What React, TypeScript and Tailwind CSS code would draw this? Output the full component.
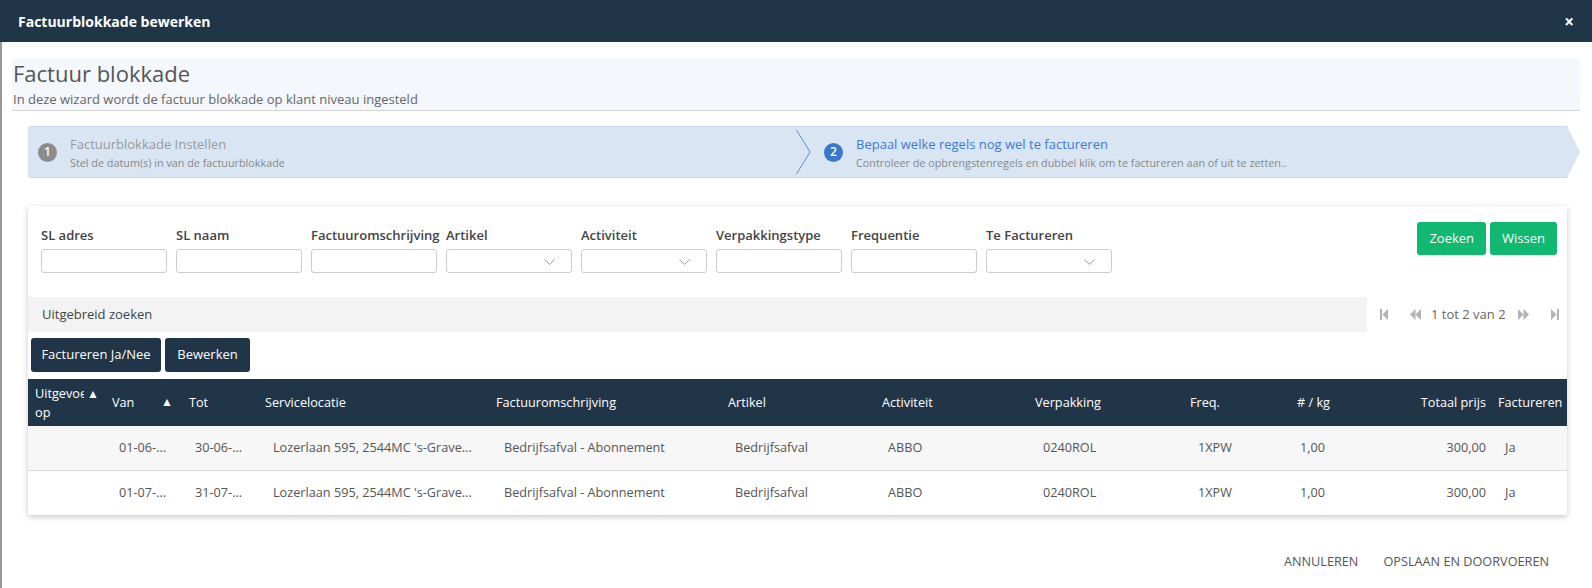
import React from "react";

const filters = [
  { label: "SL adres", select: false },
  { label: "SL naam", select: false },
  { label: "Factuuromschrijving", select: false },
  { label: "Artikel", select: true },
  { label: "Activiteit", select: true },
  { label: "Verpakkingstype", select: false },
  { label: "Frequentie", select: false },
  { label: "Te Factureren", select: true },
];

const rows = [
  ["", "01-06-...", "30-06-...", "Lozerlaan 595, 2544MC 's-Grave...", "Bedrijfsafval - Abonnement", "Bedrijfsafval", "ABBO", "0240ROL", "1XPW", "1,00", "300,00", "Ja"],
  ["", "01-07-...", "31-07-...", "Lozerlaan 595, 2544MC 's-Grave...", "Bedrijfsafval - Abonnement", "Bedrijfsafval", "ABBO", "0240ROL", "1XPW", "1,00", "300,00", "Ja"],
];

const colW = ["w-[77px]", "w-[77px]", "w-[76px]", "w-[231px]", "w-[232px]", "w-[154px]", "w-[153px]", "w-[155px]", "w-[107px]", "w-[110px]", "w-[91px]", "w-[76px]"];
const dataPad = ["pl-[14px]", "pl-[14px]", "pl-[13px]", "pl-[15px]", "pl-[15px]", "pl-[14px]", "pl-[13px]", "pl-[15px]", "pl-[15px]", "pl-[10px]", "pr-[5px] text-right", "pl-[14px]"];

function Chevron() {
  return (
    <svg width="11" height="7" viewBox="0 0 11 7" className="absolute right-[16px] top-[9px]">
      <path d="M0.5 0.5 L5.5 5.5 L10.5 0.5" fill="none" stroke="#9a9a9a" strokeWidth="1" />
    </svg>
  );
}

export default function App() {
  return (
    <div className="w-[1592px] h-[588px] bg-white overflow-hidden flex flex-col font-['Open_Sans',sans-serif] text-[13px] text-[#555]">
      {/* Title bar */}
      <div className="h-[42px] bg-[#213548] flex items-center justify-between pl-[18px] pr-[18px] shrink-0">
        <span className="text-white font-bold text-[14px]">Factuurblokkade bewerken</span>
        <span className="text-white font-bold text-[17px] leading-none">×</span>
      </div>

      <div className="flex-1 border-l-2 border-[#999] pl-[10px] pr-[12px] pt-[16px] flex flex-col">
        {/* Heading panel */}
        <div className="h-[53px] bg-[#f4f7fb] border-b border-[#d4d4d4] pt-[2px] pl-[1px]">
          <div className="text-[22px] leading-[26px] text-[#555]">Factuur blokkade</div>
          <div className="text-[13px] leading-[18px] mt-[4px] text-[#666]">In deze wizard wordt de factuur blokkade op klant niveau ingesteld</div>
        </div>

        {/* Wizard */}
        <div className="mt-[15px] ml-[16px] h-[52px] bg-[#d9e5f3] rounded-l-[3px] border-y border-[#cdd9e8] flex [clip-path:polygon(0_0,calc(100%_-_13px)_0,100%_50%,calc(100%_-_13px)_100%,0_100%)]">
          <div className="relative w-[769px] h-full flex items-center pl-[10px]">
            <div className="w-[19px] h-[19px] rounded-full bg-[#8c8c8c] text-white text-[12px] font-semibold flex items-center justify-center shrink-0">1</div>
            <div className="ml-[13px] flex flex-col">
              <span className="text-[13px] leading-[18px] text-[#999]">Factuurblokkade Instellen</span>
              <span className="text-[10.8px] leading-[15px] mt-[2px] text-[#888]">Stel de datum(s) in van de factuurblokkade</span>
            </div>
            <svg width="15" height="44" viewBox="0 0 15 44" className="absolute right-[-14px] top-[3px]">
              <path d="M0.5 0 L14 22 L0.5 44" fill="none" stroke="#5f8fcc" strokeWidth="1" />
            </svg>
          </div>
          <div className="h-full flex items-center pl-[27px]">
            <div className="w-[19px] h-[19px] rounded-full bg-[#3a78c9] text-white text-[12px] font-semibold flex items-center justify-center shrink-0">2</div>
            <div className="ml-[13px] flex flex-col">
              <span className="text-[13px] leading-[18px] text-[#3a7bd5]">Bepaal welke regels nog wel te factureren</span>
              <span className="text-[10.8px] leading-[15px] mt-[2px] text-[#888]">Controleer de opbrengstenregels en dubbel klik om te factureren aan of uit te zetten..</span>
            </div>
          </div>
        </div>

        {/* Card */}
        <div className="mt-[28px] ml-[16px] mr-[13px] bg-white shadow-[0_2px_6px_rgba(0,0,0,0.22)] pt-[16px]">
          <div className="flex justify-between items-start pl-[13px] pr-[10px]">
            <div className="flex gap-[9px] pt-[4px]">
              {filters.map((f) => (
                <div key={f.label} className="w-[126px] flex flex-col">
                  <span className="font-semibold text-[#444] leading-[19px] whitespace-nowrap">{f.label}</span>
                  <div className="relative mt-[4px] h-[24px] border border-[#ccc] rounded-[3px] bg-white">
                    {f.select && <Chevron />}
                  </div>
                </div>
              ))}
            </div>
            <div className="flex gap-[4px]">
              <button className="h-[33px] px-[12px] bg-[#10b870] text-white rounded-[3px] text-[13px]">Zoeken</button>
              <button className="h-[33px] px-[12px] bg-[#10b870] text-white rounded-[3px] text-[13px]">Wissen</button>
            </div>
          </div>

          <div className="mt-[24px] flex items-center">
            <div className="flex-1 h-[35px] bg-[#f3f3f3] flex items-center pl-[14px] text-[#444]">Uitgebreid zoeken</div>
            <div className="w-[200px] flex items-center pl-[13px] text-[#666]">
              <svg width="8" height="11" viewBox="0 0 8 11" fill="#b3b3b3">
                <rect x="0" y="0" width="2" height="11" />
                <path d="M8 0 L2.5 5.5 L8 11Z" />
              </svg>
              <svg width="11" height="11" viewBox="0 0 11 11" fill="#b3b3b3" className="ml-[22px]">
                <path d="M5.5 0 L0 5.5 L5.5 11Z M11 0 L5.5 5.5 L11 11Z" />
              </svg>
              <span className="ml-[10px] text-[13px]">1 tot 2 van 2</span>
              <svg width="11" height="11" viewBox="0 0 11 11" fill="#b3b3b3" className="ml-[12px]">
                <path d="M0 0 L5.5 5.5 L0 11Z M5.5 0 L11 5.5 L5.5 11Z" />
              </svg>
              <svg width="8" height="11" viewBox="0 0 8 11" fill="#b3b3b3" className="ml-[22px]">
                <path d="M0 0 L5.5 5.5 L0 11Z" />
                <rect x="6" y="0" width="2" height="11" />
              </svg>
            </div>
          </div>

          <div className="mt-[6px] pl-[3px] flex gap-[4px]">
            <button className="h-[34px] w-[130px] bg-[#213548] text-white rounded-[3px] text-[13px]">Factureren Ja/Nee</button>
            <button className="h-[34px] w-[85px] bg-[#213548] text-white rounded-[3px] text-[13px]">Bewerken</button>
          </div>

          {/* Table */}
          <div className="mt-[7px] text-[12.7px]">
            <div className="h-[47px] bg-[#213548] text-white flex items-center">
              <div className={`${colW[0]} pl-[7px] leading-[19px]`}>
                <div className="flex items-center">
                  <span className="w-[49px] overflow-hidden whitespace-nowrap">Uitgevoerd</span>
                  <span className="ml-[3px] text-[12px]">▲</span>
                </div>
                <div>op</div>
              </div>
              <div className={`${colW[1]} pl-[7px] pr-[9px] flex justify-between items-center`}>
                <span>Van</span>
                <span className="text-[12px]">▲</span>
              </div>
              <div className={`${colW[2]} pl-[7px]`}>Tot</div>
              <div className={`${colW[3]} pl-[7px]`}>Servicelocatie</div>
              <div className={`${colW[4]} pl-[7px]`}>Factuuromschrijving</div>
              <div className={`${colW[5]} pl-[7px]`}>Artikel</div>
              <div className={`${colW[6]} pl-[7px]`}>Activiteit</div>
              <div className={`${colW[7]} pl-[7px]`}>Verpakking</div>
              <div className={`${colW[8]} pl-[7px]`}>Freq.</div>
              <div className={`${colW[9]} pl-[7px]`}>#&nbsp;/&nbsp;kg</div>
              <div className={`${colW[10]} pr-[5px] text-right`}>Totaal prijs</div>
              <div className={`${colW[11]} pl-[7px] whitespace-nowrap overflow-hidden`}>Factureren</div>
            </div>
            {rows.map((r, i) => (
              <div key={i} className={`flex items-center ${i === 0 ? "bg-[#f7f7f7] border-b border-[#dcdcdc] h-[45px]" : "bg-white h-[44px]"}`}>
                {r.map((c, j) => (
                  <div key={j} className={`${colW[j]} ${dataPad[j]} whitespace-nowrap overflow-hidden text-[#555]`}>{c}</div>
                ))}
              </div>
            ))}
          </div>
        </div>

        {/* Footer */}
        <div className="mt-[37px] flex justify-end gap-[25px] pr-[31px] leading-[18px] text-[12.7px] text-[#555]">
          <span>ANNULEREN</span>
          <span>OPSLAAN EN DOORVOEREN</span>
        </div>
      </div>
    </div>
  );
}
